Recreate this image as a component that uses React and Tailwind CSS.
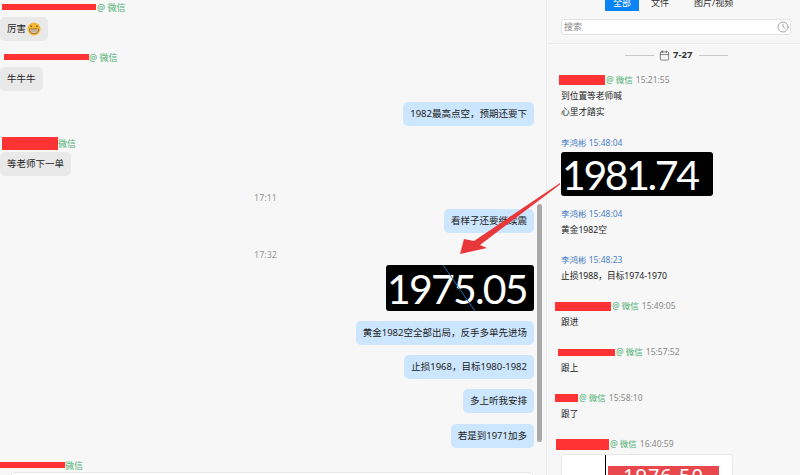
import React from 'react'
import { Calendar, Clock } from 'lucide-react'

const Bubble = ({ className, children }) => (
  <div className={`h-6 px-[7px] rounded-[5px] flex items-center text-[9.5px] leading-none text-[#222] ${className}`}>{children}</div>
)

const Mine = ({ className, children }) => (
  <div className={`flex justify-end pr-[12px] shrink-0 ${className}`}>
    <Bubble className="bg-[#cce6ff]">{children}</Bubble>
  </div>
)

const Grin = () => (
  <svg width="14" height="14" viewBox="0 0 14 14" className="ml-px">
    <circle cx="7" cy="7" r="6.5" fill="#f5b62e" />
    <path d="M3 4.5q1-1.2 2 0M9 4.5q1-1.2 2 0" stroke="#7a4a10" strokeWidth="1" fill="none" />
    <path d="M2.5 7h9q0 4.5-4.5 4.5T2.5 7z" fill="#fff" stroke="#7a4a10" strokeWidth=".7" />
    <path d="M2.8 9h8.4M5 7v4.2M7 7v4.5M9 7v4.2" stroke="#7a4a10" strokeWidth=".5" />
  </svg>
)

const Time = ({ className, children }) => (
  <div className={`h-[14px] shrink-0 text-center text-[9px] leading-[14px] text-[#999] pr-[15px] ${className}`}>{children}</div>
)

const Name = ({ bar, ml, h, full, className }) => (
  <div className={`h-[14px] shrink-0 flex items-center text-[9px] leading-none text-[#4caf73] ${className}`}>
    <span className={`${ml} ${bar} ${h} bg-[#ff3333]`} />
    <span>{full ? '@ 微信' : '微信'}</span>
  </div>
)

const SideName = ({ bar, ml, h, time, className }) => (
  <div className={`h-[14px] shrink-0 flex items-center text-[8.5px] leading-none whitespace-nowrap ${className}`}>
    <span className={`${ml} ${bar} ${h} bg-[#ff3333] shrink-0`} />
    <span className="ml-[1px] text-[#4caf73]">@ 微信</span>
    <span className="ml-[3px] text-[#888]">{time}</span>
  </div>
)

const Staff = ({ time, className }) => (
  <div className={`h-[14px] shrink-0 ml-[14px] text-[8.5px] leading-[14px] text-[#4a7fc8] ${className}`}>李鸿彬 {time}</div>
)

const Line = ({ className, children }) => (
  <div className={`h-[14px] shrink-0 ml-[14px] text-[8.7px] leading-[14px] text-[#222] ${className}`}>{children}</div>
)

const NumberShot = ({ className, children }) => (
  <div className={`relative shrink-0 bg-black rounded-[3px] flex items-center text-white text-[41px] leading-none font-['Lato',sans-serif] overflow-hidden ${className}`}>
    {children}
  </div>
)

const App = () => {
  return (
    <div className="relative w-[800px] h-[475px] overflow-hidden bg-[#f7f7f7] flex font-['Noto_Sans','Noto_Sans_CJK_SC',sans-serif]">
      {/* chat */}
      <div className="relative w-[547px] h-full border-r border-[#ececec] flex flex-col shrink-0 overflow-hidden">
        <Name ml="ml-[2px]" bar="w-[94px]" h="h-[6px]" full className="gap-[1px]" />
        <div className="mt-[3px] flex shrink-0"><Bubble className="bg-[#e9e9e9]">厉害<Grin /></Bubble></div>
        <Name ml="ml-[4px]" bar="w-[85px]" h="h-[6px]" full className="mt-[9px]" />
        <div className="mt-[3px] flex shrink-0"><Bubble className="bg-[#e9e9e9]">牛牛牛</Bubble></div>
        <Mine className="mt-[11px]">1982最高点空，预期还要下</Mine>
        <Name ml="ml-[2px]" bar="w-[56px]" h="h-[13px]" className="mt-[10px]" />
        <div className="mt-[2px] flex shrink-0"><Bubble className="bg-[#e9e9e9]">等老师下一单</Bubble></div>
        <Time className="mt-[15px]">17:11</Time>
        <Mine className="mt-[4px]">看样子还要继续震</Mine>
        <Time className="mt-[15px]">17:32</Time>
        <div className="mt-[3px] flex justify-end pr-[12px] shrink-0">
          <NumberShot className="w-[148px] h-[46px] pl-[1px] tracking-[-1.8px]">
            1975.05
            <svg width="148" height="46" className="absolute left-0 top-0">
              <path d="M57 0L89 46" stroke="#1d6fb8" strokeWidth="1" />
            </svg>
          </NumberShot>
        </div>
        <Mine className="mt-[10px]">黄金1982空全部出局，反手多单先进场</Mine>
        <Mine className="mt-[10px]">止损1968，目标1980-1982</Mine>
        <Mine className="mt-[10px]">多上听我安排</Mine>
        <Mine className="mt-[11px]">若是到1971加多</Mine>
        <Name ml="ml-0" bar="w-[65px]" h="h-[6px]" className="mt-[10px]" />
        <div className="ml-[10px] mr-[12px] h-[20px] shrink-0 bg-white border border-[#e6e6e6] rounded-t-[5px]" />
        {/* scrollbar */}
        <div className="absolute left-[537px] top-[204px] w-[5px] h-[238px] rounded-full bg-[#a9a9a9]" />
      </div>

      {/* side panel */}
      <div className="flex-1 min-w-0 flex flex-col overflow-hidden">
        <div className="border-b border-[#ececec] h-[44px] shrink-0">
          <div className="h-[11px] flex items-end text-[9px] leading-none text-[#333] overflow-hidden">
            <div className="ml-[58px] w-[34px] h-[11px] bg-[#0a84f5] text-white text-center leading-[5px]">全部</div>
            <div className="ml-[12px] h-[11px] leading-[5px]">文件</div>
            <div className="ml-[25px] h-[11px] leading-[5px]">图片/视频</div>
          </div>
          <div className="mt-[8px] ml-[14px] w-[230px] h-4 bg-white border border-[#e2e2e2] rounded-[3px] flex items-center justify-between px-[2px] text-[9px] text-[#888]">
            <span>搜索</span>
            <Clock size={12} strokeWidth={1.3} className="text-[#777] -mr-[1px]" />
          </div>
        </div>

        <div className="mt-[4px] h-[14px] flex items-center text-[9.5px] font-bold text-[#333] leading-none shrink-0">
          <span className="ml-[78px] w-[29px] h-px bg-[#c8c8c8]" />
          <Calendar size={11} strokeWidth={1.4} className="ml-[5px] text-[#444]" />
          <span className="ml-[3px] w-[20px]">7-27</span>
          <span className="ml-[6px] w-[29px] h-px bg-[#c8c8c8]" />
        </div>

        <SideName ml="ml-[12px]" bar="w-[46px]" h="h-[10px]" time="15:21:55" className="mt-[11px]" />
        <Line className="mt-[2px]">到位置等老师喊</Line>
        <Line className="mt-[2px]">心里才踏实</Line>

        <Staff time="15:48:04" className="mt-[17px]" />
        <div className="mt-[2px] ml-[14px] shrink-0">
          <NumberShot className="w-[152px] h-[44px] pl-[1px] tracking-[-2.4px]">1981.74</NumberShot>
        </div>
        <Staff time="15:48:04" className="mt-[11px]" />
        <Line className="mt-[2px]">黄金1982空</Line>
        <Staff time="15:48:23" className="mt-[16px]" />
        <Line className="mt-[2px]">止损1988，目标1974-1970</Line>

        <SideName ml="ml-[8px]" bar="w-[56px]" h="h-[9px]" time="15:49:05" className="mt-[16px]" />
        <Line className="mt-[2px]">跟进</Line>
        <SideName ml="ml-[11px]" bar="w-[57px]" h="h-[7px]" time="15:57:52" className="mt-[16px]" />
        <Line className="mt-[2px]">跟上</Line>
        <SideName ml="ml-[8px]" bar="w-[23px]" h="h-[8px]" time="15:58:10" className="mt-[16px]" />
        <Line className="mt-[2px]">跟了</Line>
        <SideName ml="ml-[9px]" bar="w-[53px]" h="h-[11px]" time="16:40:59" className="mt-[16px]" />

        <div className="mt-[3px] ml-[14px] w-[172px] h-[40px] shrink-0 bg-white border border-[#e8e8e8] rounded-t-[3px] flex">
          <span className="ml-[43px] w-[1px] h-full bg-black" />
          <div className="ml-[2px] mt-[11px] w-[111px] h-[30px] bg-[#e8484c] text-white text-[20px] leading-[20px] text-center tracking-[1px]">1976.50</div>
        </div>
      </div>

      {/* red annotation arrow */}
      <svg width="800" height="475" className="absolute left-0 top-0 pointer-events-none">
        <polygon points="460,254 464,239 474,241 560,183 560,184.5 480,245 487,248" fill="#e8383a" />
      </svg>
    </div>
  )
}

export default App
